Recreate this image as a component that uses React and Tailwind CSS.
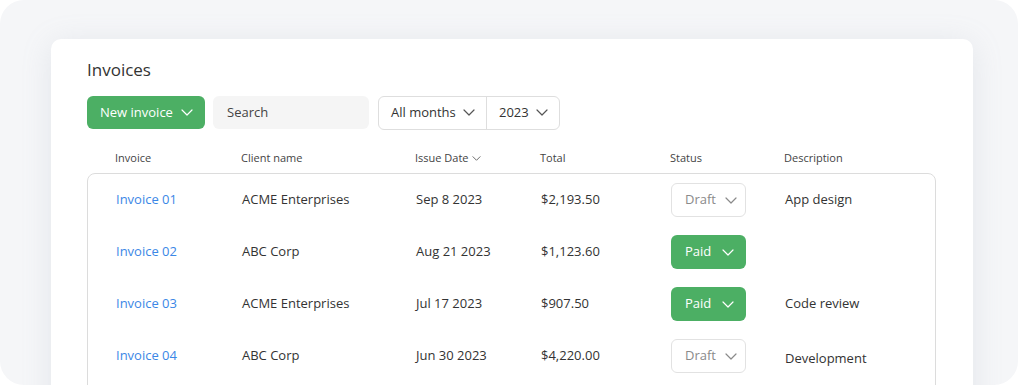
import React from 'react';

const rows = [
  { id: 'Invoice 01', client: 'ACME Enterprises', date: 'Sep 8 2023', total: '$2,193.50', status: 'Draft', desc: 'App design' },
  { id: 'Invoice 02', client: 'ABC Corp', date: 'Aug 21 2023', total: '$1,123.60', status: 'Paid', desc: '' },
  { id: 'Invoice 03', client: 'ACME Enterprises', date: 'Jul 17 2023', total: '$907.50', status: 'Paid', desc: 'Code review' },
  { id: 'Invoice 04', client: 'ABC Corp', date: 'Jun 30 2023', total: '$4,220.00', status: 'Draft', desc: 'Development' },
];

function Chevron({ className = '' }) {
  return (
    <svg viewBox="0 0 12 7" className={className} fill="none" stroke="currentColor" strokeWidth="1.2" strokeLinecap="round" strokeLinejoin="round">
      <path d="M1 1l5 5 5-5" />
    </svg>
  );
}

const cols = 'grid grid-cols-[126px_174px_125px_130px_114px_1fr] items-center';

export default function App() {
  return (
    <div className="w-[1024px] h-[387px] bg-white font-['Open_Sans',sans-serif] text-[#333]">
      <div className="w-[1018px] h-[385px] rounded-[24px] bg-[#f5f6f8] overflow-hidden pt-[39px] pl-[51px]">
        <div className="w-[922px] h-[400px] bg-white rounded-[10px] shadow-[0_4px_30px_rgba(150,160,180,0.18)] pt-[21px] pl-[36px]">
          <h1 className="text-[17px] font-medium text-[#333] leading-[20px]">Invoices</h1>

          <div className="flex items-center mt-[16px] h-[33px]">
            <button className="h-[33px] w-[118px] rounded-[6px] bg-[#4caf64] text-white text-[13px] flex items-center pl-[13px] gap-[8px]">
              New invoice
              <Chevron className="w-[12px] h-[7px]" />
            </button>
            <div className="ml-[8px] h-[33px] w-[156px] rounded-[6px] bg-[#f5f5f5] text-[13px] text-[#444] flex items-center pl-[14px]">
              Search
            </div>
            <div className="ml-[9px] h-[34px] w-[182px] rounded-[6px] border border-[#dedede] flex text-[13px] text-[#333]">
              <div className="w-[108px] flex items-center pl-[12px] gap-[7px] border-r border-[#dedede]">
                All months
                <Chevron className="w-[12px] h-[7px] text-[#555]" />
              </div>
              <div className="flex items-center pl-[12px] gap-[7px]">
                2023
                <Chevron className="w-[12px] h-[7px] text-[#555]" />
              </div>
            </div>
          </div>

          <div className="w-[849px]">
            <div className={`${cols} pl-[28px] h-[44px] pt-[14px] text-[11px] text-[#444]`}>
              <span>Invoice</span>
              <span>Client name</span>
              <span className="flex items-center gap-[3px]">
                Issue Date
                <Chevron className="w-[9px] h-[5px] text-[#555]" />
              </span>
              <span>Total</span>
              <span>Status</span>
              <span>Description</span>
            </div>
            <div className="border border-[#dcdcdc] rounded-[8px] h-[260px]">
              {rows.map((r) => (
                <div key={r.id} className={`${cols} pl-[28px] h-[52px] text-[13px]`}>
                  <span className="text-[#3b87e6]">{r.id}</span>
                  <span>{r.client}</span>
                  <span>{r.date}</span>
                  <span>{r.total}</span>
                  <span>
                    {r.status === 'Paid' ? (
                      <span className="w-[75px] h-[34px] rounded-[6px] bg-[#4caf64] text-white flex items-center pl-[14px] gap-[11px]">
                        Paid
                        <Chevron className="w-[12px] h-[7px]" />
                      </span>
                    ) : (
                      <span className="w-[75px] h-[34px] rounded-[6px] border border-[#e2e2e2] text-[#8a8a8a] flex items-center pl-[13px] gap-[9px]">
                        Draft
                        <Chevron className="w-[12px] h-[7px]" />
                      </span>
                    )}
                  </span>
                  <span className={r.desc === 'Development' ? 'pt-[6px]' : ''}>{r.desc}</span>
                </div>
              ))}
            </div>
          </div>
        </div>
      </div>
    </div>
  );
}
